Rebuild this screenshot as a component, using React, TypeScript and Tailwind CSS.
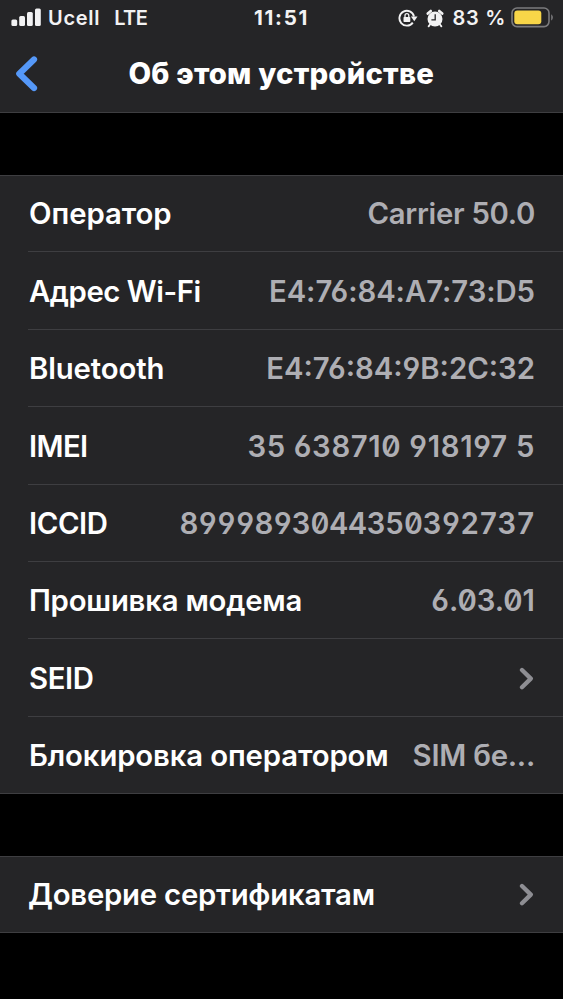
import clsx from "clsx";

type Row = {
  label: string;
  labelClass?: string;
  value?: string;
  valueClass?: string;
  link?: boolean;
};

const info: Row[] = [
  { label: "Оператор", labelClass: "tracking-[-0.05px]", value: "Carrier 50.0", valueClass: "tracking-[-0.3px]" },
  { label: "Адрес Wi-Fi", labelClass: "tracking-[-0.45px]", value: "E4:76:84:A7:73:D5", valueClass: "tracking-[-0.05px]" },
  { label: "Bluetooth", labelClass: "tracking-[-0.1px]", value: "E4:76:84:9B:2C:32" },
  { label: "IMEI", labelClass: "tracking-[-0.6px]", value: "35 638710 918197 5", valueClass: "slashed-zero tracking-[0.65px]" },
  { label: "ICCID", labelClass: "tracking-[-0.4px]", value: "8999893044350392737", valueClass: "slashed-zero tabular-nums tracking-[-0.25px]" },
  { label: "Прошивка модема", labelClass: "tracking-[-0.22px]", value: "6.03.01" , valueClass: "slashed-zero" },
  { label: "SEID", labelClass: "tracking-[-0.4px]", link: true },
  { label: "Блокировка оператором", labelClass: "tracking-[-0.12px]", value: "SIM бе...", valueClass: "tracking-[-0.25px]" },
];

const certs: Row[] = [{ label: "Доверие сертификатам", labelClass: "-ml-px tracking-[-0.22px]", link: true }];

function StatusBar() {
  return (
    <div className="flex h-9 items-center text-[20px] font-[560] text-[#f2f2f3]">
      <div className="flex flex-1 items-center pl-[11px]">
        <svg width="30" height="20" viewBox="0 0 30 20" fill="currentColor">
          <rect x="0.4" y="11.5" width="5.8" height="6.5" rx="1.5" />
          <rect x="8.2" y="8" width="5.8" height="10" rx="1.5" />
          <rect x="16" y="4" width="5.8" height="14" rx="1.5" />
          <rect x="24" y="0.5" width="5.8" height="17.5" rx="1.5" />
        </svg>
        <span className="ml-[7px] tracking-[0.7px]">Ucell</span>
        <span className="ml-[14px] tracking-[-0.6px]">LTE</span>
      </div>
      <span className="-ml-[1px] mr-[1px] text-[20.5px] font-bold tracking-[1.7px]">11:51</span>
      <div className="flex flex-1 items-center justify-end pr-[9px]">
        <LockIcon />
        <AlarmIcon />
        <span className="ml-[9px] tracking-[0.7px]">83 %</span>
        <svg className="ml-[5px]" width="43" height="22" viewBox="0 0 43 22">
          <rect x="1" y="1" width="37" height="18.6" rx="5" fill="none" stroke="#7b7b7d" strokeWidth="1.6" />
          <rect x="3.3" y="3.4" width="27" height="13.8" rx="3" fill="#f8d648" />
          <path d="M40.2 7.2c2.2 1.6 2.2 4.8 0 6.4z" fill="#7b7b7d" />
        </svg>
      </div>
    </div>
  );
}

function LockIcon() {
  return (
    <svg width="20" height="18" viewBox="0 0 20 18" fill="none">
      <path d="M14.8 13.6A7.4 7.4 0 1 1 16 7.4" stroke="currentColor" strokeWidth="1.9" />
      <path d="M12.9 7.4h6.6l-3.2 4.8z" fill="currentColor" />
      <rect x="5.5" y="7.9" width="6.8" height="5.2" rx="0.8" fill="currentColor" />
      <path d="M7 8.2V6.6a1.9 1.9 0 0 1 3.8 0v1.6" stroke="currentColor" strokeWidth="1.3" />
    </svg>
  );
}

function AlarmIcon() {
  return (
    <svg className="ml-[8px]" width="18" height="19" viewBox="0 0 18 19" fill="none">
      <circle cx="9" cy="10" r="7.5" fill="currentColor" />
      <path d="M1.8 4.6 4.8 2M16.2 4.6 13.2 2" stroke="currentColor" strokeWidth="2.6" strokeLinecap="round" />
      <path d="m4 15.5-1.4 1.9M14 15.5l1.4 1.9" stroke="currentColor" strokeWidth="1.8" strokeLinecap="round" />
      <path d="M9.2 5.2V10.8H5.4" stroke="#252527" strokeWidth="1.3" />
    </svg>
  );
}

function Chevron() {
  return (
    <svg width="17" height="24" viewBox="0 0 17 24" fill="none">
      <path d="M4 3 12.8 11.6 4 20.2" stroke="#8e8e93" strokeWidth="4.3" strokeLinecap="round" strokeLinejoin="round" />
    </svg>
  );
}

function List({ rows }: { rows: Row[] }) {
  return (
    <div className="border-y border-[#3e3e41] bg-[#252527] pl-7">
      {rows.map((row, i) => (
        <div
          key={row.label}
          className={clsx(
            "flex items-center justify-between pr-7 pl-px whitespace-nowrap",
            rows.length === 1 && "h-[75.6px] pt-px",
            rows.length > 1 && i === 0 && "h-[76.4px] border-b border-[#3e3e41] pt-px",
            i > 0 && "pt-[2.4px]",
            i > 0 && i < rows.length - 1 && "h-[77.4px] border-b border-[#3e3e41]",
            i > 0 && i === rows.length - 1 && "h-[76.4px]"
          )}
        >
          <span className={row.labelClass}>{row.label}</span>
          {row.value && (
            <span className={clsx("text-[#aeaeb3] [font-feature-settings:'cv03','cv04']", row.valueClass)}>
              {row.value}
            </span>
          )}
          {row.link && <Chevron />}
        </div>
      ))}
    </div>
  );
}

export default function App() {
  return (
    <div className="h-[999px] w-[563px] overflow-hidden bg-black font-['Inter',sans-serif] text-[29.3px] font-[560] text-white">
      <header className="h-[113px] border-b border-[#3e3e41] bg-[#252527]">
        <StatusBar />
        <div className="flex h-[76px] items-center">
          <div className="w-[128.5px] shrink-0 pl-[14px]">
            <svg width="26" height="38" viewBox="0 0 26 38" fill="none">
              <path d="M20 4.5 5.3 18.8 20 33" stroke="#5598f8" strokeWidth="6.2" strokeLinecap="round" strokeLinejoin="round" />
            </svg>
          </div>
          <h1 className="text-[29.3px] font-extrabold tracking-[0.2px] whitespace-nowrap">Об этом устройстве</h1>
        </div>
      </header>
      <main className="flex flex-col gap-[61.5px] pt-[62px]">
        <List rows={info} />
        <List rows={certs} />
      </main>
    </div>
  );
}
